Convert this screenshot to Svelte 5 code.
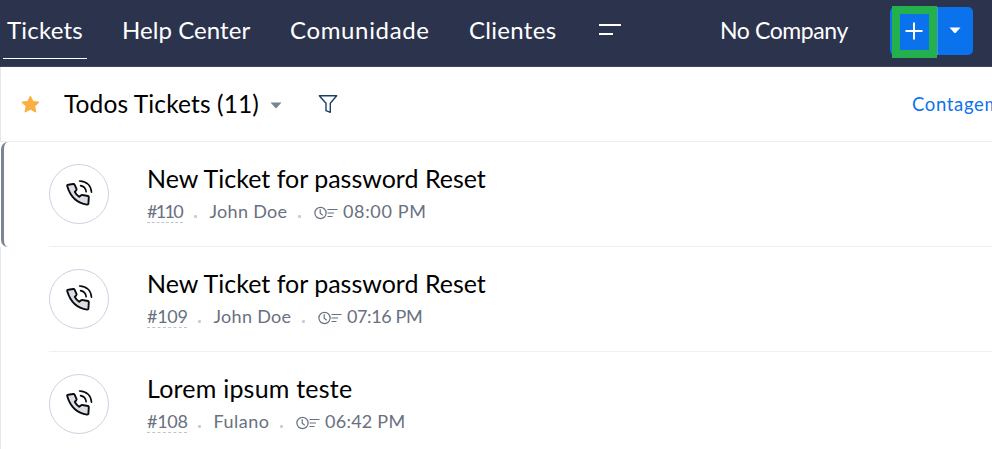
<script>
  const nav = [
    { label: 'Tickets', w: 119, ls: 0.2, active: true },
    { label: 'Help Center', w: 168, ls: 0.06 },
    { label: 'Comunidade', w: 179, ls: 0.65 },
    { label: 'Clientes', w: 130, ls: 0.3 }
  ];
  const tickets = [
    { title: 'New Ticket for password Reset', ls: 0, id: '#110', idw: 36, idls: -1.7, name: 'John Doe', namew: 78, namels: 0.3, time: '08:00 PM', timels: 0.65, selected: true },
    { title: 'New Ticket for password Reset', ls: 0, id: '#109', idw: 40, idls: -0.3, name: 'John Doe', namew: 78, namels: 0.3, time: '07:16 PM', timels: -0.4 },
    { title: 'Lorem ipsum teste', ls: 0.22, id: '#108', idw: 40, idls: -0.3, name: 'Fulano', namew: 56, namels: 0.5, time: '06:42 PM', timels: 0.25 }
  ];
</script>

<div class="app">
  <header>
    <nav>
      {#each nav as item}
        <a class:active={item.active} style="width:{item.w}px;letter-spacing:{item.ls}px"><span>{item.label}</span></a>
      {/each}
      <svg class="more" width="24" height="14" viewBox="0 0 24 14" stroke="#fff" stroke-width="2"><path d="M1 3h22M1 12h14" /></svg>
    </nav>
    <div class="company">No Company</div>
    <div class="actions">
      <button class="add" aria-label="Add"><svg width="18" height="18" viewBox="0 0 18 18"><path d="M9 .5v17M.5 9h17" stroke="#fff" stroke-width="2" /></svg></button>
      <button class="drop" aria-label="More"><svg width="12" height="7" viewBox="0 0 12 7"><path d="M.5.5h11l-4.7 5.2q-.8.8-1.6 0z" fill="#fff" /></svg></button>
    </div>
  </header>

  <section class="toolbar">
    <svg class="star" width="20" height="19" viewBox="0 0 20 19"><path d="M10.4 1.1l2.6 5.3 6 .8-4.3 4 1.1 5.9-5.4-2.8-5.4 2.8 1.1-5.9-4.3-4 6-.8z" fill="#f9b041" stroke="#f9b041" stroke-linejoin="round" /></svg>
    <h1>Todos Tickets (11)</h1>
    <svg class="caret" width="12" height="7" viewBox="0 0 12 7"><path d="M.5.5h11L6.8 5.8q-.8.8-1.6 0z" fill="#7b8494" /></svg>
    <svg class="filter" width="20" height="20" viewBox="0 0 20 20" fill="none" stroke-width="1.4" stroke-linejoin="round"><path d="M1.3 1.7h17.4l-6.4 7.5v9.1l-4.3-1.6V9.2z" stroke="#1c4065" /></svg>
    <a class="count">Contagem</a>
  </section>

  <main>
    {#each tickets as t}
      <article class:selected={t.selected}>
        <div class="avatar">
          <svg width="28" height="28" viewBox="0 0 28 28" fill="none" stroke="#090b0e" stroke-linejoin="round" stroke-linecap="round">
            <path d="M2.2 6Q2 4.8 3.2 4.7l5-.7q1-.1 1.5.9l1.8 4q.3.8-.3 1.4l-1.4 1.6q1.2 2.7 4.4 4.9l2-1.6q.6-.5 1.4-.2l5.3 1q1 .3.9 1.3l-.4 6.2q-.1 1.2-1.3 1.1Q7 22.5 2.2 6z" fill="#dcdee6" stroke-width="1.9" />
            <path d="M14.6 1Q25.6 1.8 26.5 12.2M15.6 5.6Q20.6 6.6 21.2 11.8" stroke-width="1.6" />
          </svg>
        </div>
        <div class="body">
          <h2 style="letter-spacing:{t.ls}px">{t.title}</h2>
          <div class="meta">
            <a class="id" style="width:{t.idw}px;letter-spacing:{t.idls}px">{t.id}</a>
            <i></i>
            <span class="name" style="width:{t.namew}px;letter-spacing:{t.namels}px">{t.name}</span>
            <i></i>
            <svg width="26" height="14" viewBox="0 0 26 14" fill="none" stroke="#697080" stroke-width="1.2"><circle cx="6.5" cy="7" r="5.6" /><path d="M6.2 3.3v4l2.5 2M13.5 3.5h10M13.5 7h6.5M13.5 10.5h5" /></svg>
            <time style="letter-spacing:{t.timels}px">{t.time}</time>
          </div>
        </div>
      </article>
    {/each}
  </main>
</div>

<style>
  :global(body) { overflow: hidden; background: #fff; }
  .app { width: 992px; height: 449px; overflow: hidden; font-family: Lato, 'Liberation Sans', sans-serif; box-sizing: border-box; color: #000; }
  header { height: 67px; box-sizing: border-box; background: #2c334d; border-bottom: 1px solid #40435c; display: flex; color: #fff; font-size: 24px; }
  nav { display: flex; padding-left: 3px; width: 714px; box-sizing: border-box; }
  nav a { height: 59px; line-height: 60px; white-space: nowrap; flex: none; box-sizing: border-box; }
  nav a.active { background: linear-gradient(#fff, #fff) 0 58px / 84px 1px no-repeat; padding-left: 4px; }
  .more { margin: 22px 0 0 -1px; flex: none; }
  .company { width: 176px; padding-left: 6px; box-sizing: border-box; line-height: 60px; white-space: nowrap; font-size: 23px; letter-spacing: -0.4px; }
  .actions { display: flex; margin-top: 7px; width: 83px; height: 48px; border-radius: 5px; background: #0b72ed; }
  button { border: 0; padding: 0; background: none; display: flex; align-items: center; justify-content: center; }
  .add { border: 8px solid #24b14d; width: 45px; height: 52px; margin: -1px 0 0 2px; box-sizing: border-box; }
  .add svg { margin: 0 1px 3px 0; flex: none; }
  .drop { width: 36px; height: 48px; border-left: 1px solid #438ff4; box-sizing: border-box; }
  .drop svg { margin: 0 2px 2px 0; }
  .toolbar { height: 75px; box-sizing: border-box; display: flex; align-items: center; border-bottom: 1px solid #edeef0; border-left: 1px solid #e5e7ea; padding-left: 19px; }
  .toolbar svg { flex: none; }
  h1, h2 { margin: 0; font-weight: 400; white-space: nowrap; }
  h1 { width: 205px; margin-left: 24px; font-size: 24.5px; line-height: 30px; letter-spacing: 0.12px; flex: none; }
  .toolbar .caret { margin: 2px 0 0 1px; }
  .filter { margin-left: 36px; }
  .count { margin-left: 574px; color: #0b72ed; font-size: 18.5px; letter-spacing: 0.65px; white-space: nowrap; line-height: 24px; }
  article { height: 105px; box-sizing: border-box; display: flex; padding-left: 48px; border-left: 1px solid #e5e7ea; background: repeating-linear-gradient(90deg, #e9e9ec 0 1px, #f8f8f9 1px 2px) 48px 104px / 100% 1px no-repeat; }
  article.selected { border-left: 3px solid #7c8691; border-radius: 7px 0 0 7px; margin-left: 1px; padding-left: 45px; background-position: 45px 104px; }
  .avatar { width: 60px; height: 60px; box-sizing: border-box; border: 1px solid #cfd0e2; border-radius: 50%; margin-top: 22px; flex: none; display: flex; align-items: center; justify-content: center; }
  .body { margin-left: 38px; padding-top: 21px; }
  h2 { font-size: 25px; line-height: 30px; }
  .meta { display: flex; align-items: flex-start; color: #697080; font-size: 18px; line-height: 22px; padding-top: 7px; white-space: nowrap; }
  .id { height: 22px; border-bottom: 1px dashed #bfc2d5; }
  i { width: 3px; height: 3px; border-radius: 1px; background: #c9cbdd; margin: 15px 12px 0 11px; }
  .name { text-indent: 0.5px; }
  .meta svg { margin: 6px 3px 0 1px; }
</style>
